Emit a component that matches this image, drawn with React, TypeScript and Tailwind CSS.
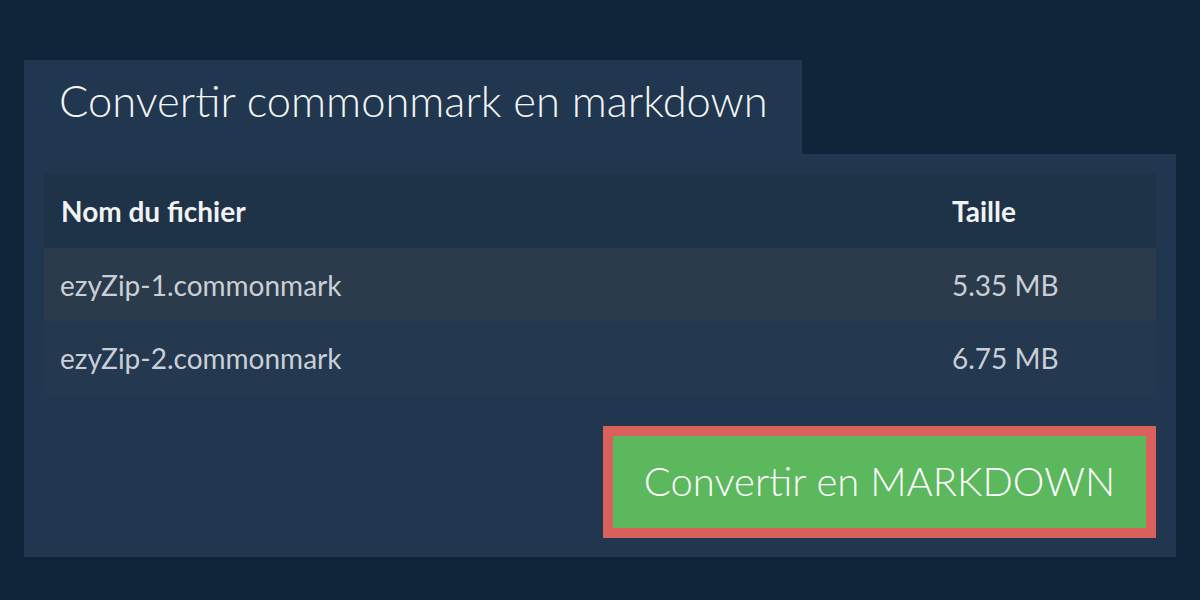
export default function App() {
  const rows = [
    { name: "ezyZip-1.commonmark", size: "5.35 MB", bg: "bg-[#2c3b4c]" },
    { name: "ezyZip-2.commonmark", size: "6.75 MB", bg: "bg-[#243850]" },
  ];
  return (
    <div
      className="w-[1200px] h-[600px] bg-[#10243a] pt-[60px] px-[24px]"
      style={{ fontFamily: "Lato, 'Open Sans', sans-serif" }}
    >
      <div className="w-[778px] h-[94px] bg-[#21364f] flex items-center pl-[35px] pb-[12px]">
        <h1 className="text-[43.5px] font-light text-[#f2f4f6] leading-none">
          Convertir commonmark en markdown
        </h1>
      </div>
      <div className="w-[1152px] h-[403px] bg-[#21364f] pt-[20px] px-[20px]">
        <div className="flex flex-col">
          <div className="h-[74px] bg-[#1e3248] flex items-center text-[28px] font-bold text-[#f0f2f4]">
            <div className="w-[908px] pl-[17px]">Nom du fichier</div>
            <div>Taille</div>
          </div>
          {rows.map((r) => (
            <div
              key={r.name}
              className={`h-[73px] ${r.bg} flex items-center text-[28px] text-[#c9cfd6]`}
            >
              <div className="w-[908px] pl-[16px]">{r.name}</div>
              <div>{r.size}</div>
            </div>
          ))}
        </div>
        <div className="flex justify-end mt-[32px]">
          <button className="w-[553px] h-[112px] border-[10px] border-[#d9605c] bg-[#5cb85c] text-white text-[40px] font-light flex items-center justify-center pb-[2px]">
            Convertir en MARKDOWN
          </button>
        </div>
      </div>
    </div>
  );
}
